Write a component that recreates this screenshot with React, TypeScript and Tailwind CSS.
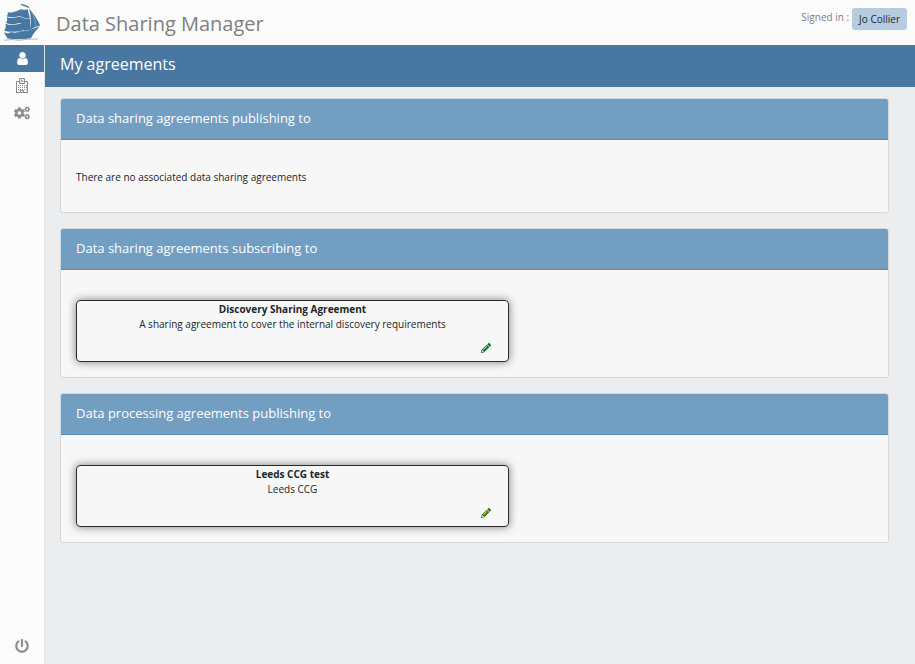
import type { ReactNode } from 'react';
import { FaCogs, FaPencilAlt, FaPowerOff } from 'react-icons/fa';

function ShipLogo() {
  return (
    <svg viewBox="0 0 44 44" className="size-11 shrink-0" role="img" aria-label="Sailing ship">
      <g fill="#4878a2">
        <path d="M20.5 4.300 C22 3.300 23.500 4.600 25 4.800 L29.500 7 L28.500 8 L25.500 6.600 C23.500 6.200 22 5.300 20.500 4.300Z" />
        <path d="M7.500 12 C10 12.800 11.500 12.800 13.500 12 C16 11.500 18.500 10.500 20.500 9 L21.200 16 C18 16.600 15.500 16.700 13.500 17.300 C11 17.500 9 16.900 6.500 16.200 C8 14.800 8.200 13.500 7.500 12Z" />
        <path d="M6.800 16.900 C10 18.300 12 18.100 14 17.800 L21.300 16.500 L21.700 23 C18 23.300 16 23.800 13.500 24.400 C11 24.500 8.500 23.900 6 23 C7.300 20.800 7.500 18.800 6.800 16.900Z" />
        <path d="M5.300 23.600 C8.500 25.200 11 25.100 13.500 24.900 L21.800 23.500 L22 31 L14 31.700 C10.500 32 7 31.700 4.300 30.700 C6 28.300 6.200 26 5.300 23.600Z" />
        <path d="M20.800 9 C23 10 25.500 10.200 28 9.300 C28 12 29 15 30 18.500 C26.500 18.500 23.500 17.800 21 16.700 C20.300 13.500 20.300 11 20.800 9Z" />
        <path d="M21.200 17.300 C24 18.700 27 19.100 30 19 L30 30 C26.500 31 23.500 30.800 21.800 30 C21 25.500 20.800 21.500 21.200 17.300Z" />
        <path d="M29 8.500 C33.500 13 37 19 40.300 25.500 C36.500 26.300 33 28 29.700 30.500 C31.300 23 31.200 15 29 8.500Z" />
        <path d="M4.300 32.300 L8 33.400 L11 32 L15 32.800 L20 31.300 L27 31 C31 29.800 35.500 28 39.700 26.300 C36 30.500 32.800 34 31 38.300 C23 39.300 15 39.500 7.500 38.500 C6.500 36.500 5 34.800 4.300 32.300Z" />
      </g>
      <path d="M4 40.200 L12 39.500 L19 40.300 L27 39.300 L38 39" fill="none" stroke="#8faec8" strokeWidth=".8" />
      <path d="M9 32.500 L13 31.500 M17 32.500 L21 31 M31 10.500 C34 16 35.500 21 36 27" fill="none" stroke="#a9c1d5" strokeWidth=".5" />
    </svg>
  );
}

function UserIcon() {
  return (
    <svg viewBox="0 0 1792 1792" className="size-[15px]" fill="currentColor" aria-hidden="true">
      <path d="M1536 1399q0 109-62.500 187t-150.500 78h-854q-88 0-150.500-78t-62.500-187q0-85 8.500-160.500t31.500-152 58.500-131 94-89 134.500-34.500q131 128 313 128t313-128q76 0 134.500 34.500t94 89 58.500 131 31.500 152 8.500 160.500zm-256-887q0 159-112.500 271.500t-271.500 112.500-271.500-112.500-112.500-271.500 112.500-271.500 271.500-112.500 271.500 112.500 112.500 271.500z" />
    </svg>
  );
}

function HospitalIcon() {
  return (
    <svg viewBox="0 0 14 16" className="h-4 w-[14px]" fill="none" stroke="currentColor" aria-hidden="true">
      <path d="M4.500 3.500H1.500V14.500H12.500V3.500H9.500M4.500 5.500V.5H9.500V5.500Z" />
      <path d="M1 14.500H13" />
      <path d="M6.200 1.500V4.500M7.800 1.500V4.500M6 3H8" strokeWidth=".7" />
      <path d="M3 7.500H12M3 9.500H12M3 11.500H12" strokeDasharray="1 1" />
      <path d="M5.500 14V12.500H8.500V14" />
    </svg>
  );
}

function NavButton({ label, active, children }: { label: string; active?: boolean; children: ReactNode }) {
  return (
    <button
      type="button"
      aria-label={label}
      className={`flex h-[27px] w-full items-center justify-center ${active ? 'bg-[#4878a2] text-white' : 'text-[#8c8c8c]'}`}
    >
      {children}
    </button>
  );
}

function Panel({ title, children }: { title: string; children: ReactNode }) {
  return (
    <section className="overflow-hidden rounded-[3px] border border-[#d5d8da] bg-[#f7f7f7]">
      <h2 className="border-b border-[#5c8bb2] bg-[#729ec2] px-[15px] pt-[9px] pb-[11px] text-[13px] leading-5 text-white">
        {title}
      </h2>
      <div className="px-[15px] pt-[30px] pb-[15px]">{children}</div>
    </section>
  );
}

function AgreementCard({ name, description, pencil }: { name: string; description: string; pencil: string }) {
  return (
    <article className="flex h-[62px] w-[433px] max-w-full flex-col rounded border border-[#292b2c] text-center leading-[15px] shadow-[0_0_8px_rgba(0,0,0,0.5)]">
      <h3 className="pt-px font-bold">{name}</h3>
      <p>{description}</p>
      <button type="button" aria-label={`Edit ${name}`} className={`mt-auto mr-[17px] mb-2 self-end ${pencil}`}>
        <FaPencilAlt className="size-[10px]" />
      </button>
    </article>
  );
}

export default function App() {
  return (
    <div className="flex min-h-screen flex-col bg-[#ecedef] font-['Open_Sans','Noto_Sans',sans-serif] text-[10px] text-[#212529]">
      <header className="flex h-[45px] items-start bg-[#fcfcfc]">
        <ShipLogo />
        <h1 className="grow pt-2 pl-3 text-[20px] leading-8 text-[#808080]">Data Sharing Manager</h1>
        <div className="flex items-start gap-[3px] pt-2 pr-2">
          <span className="pt-px leading-4 text-[#808080]">Signed in :</span>
          <button type="button" className="h-[22px] rounded-[3px] bg-[#b7cce0] px-[7px] leading-5">
            Jo Collier
          </button>
        </div>
      </header>
      <div className="flex grow">
        <nav className="flex w-[45px] shrink-0 flex-col border-r border-[#e4e5e7] bg-[#fcfcfc]">
          <NavButton label="My agreements" active>
            <UserIcon />
          </NavButton>
          <NavButton label="Organisations">
            <HospitalIcon />
          </NavButton>
          <NavButton label="Settings">
            <FaCogs className="size-4" />
          </NavButton>
          <div className="mt-auto pb-[5px]">
            <NavButton label="Sign out">
              <FaPowerOff className="size-[14px]" />
            </NavButton>
          </div>
        </nav>
        <main className="min-w-0 grow">
          <h2 className="h-[42px] bg-[#4878a2] pt-[7px] pl-[15px] text-[16px] leading-6 text-white">My agreements</h2>
          <div className="flex flex-col gap-[15px] pt-[11px] pr-[26px] pb-4 pl-[15px]">
            <Panel title="Data sharing agreements publishing to">
              <p className="pb-3 leading-[15px]">There are no associated data sharing agreements</p>
            </Panel>
            <Panel title="Data sharing agreements subscribing to">
              <AgreementCard
                name="Discovery Sharing Agreement"
                description="A sharing agreement to cover the internal discovery requirements"
                pencil="text-[#087a38]"
              />
            </Panel>
            <Panel title="Data processing agreements publishing to">
              <AgreementCard name="Leeds CCG test" description="Leeds CCG" pencil="text-[#3f7808]" />
            </Panel>
          </div>
        </main>
      </div>
    </div>
  );
}
